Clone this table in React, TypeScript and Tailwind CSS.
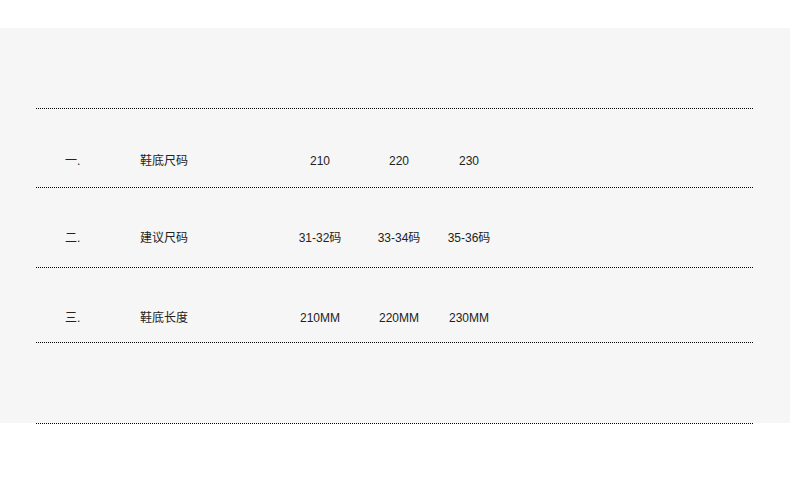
const rows = [
  { no: "一.", label: "鞋底尺码", values: ["210", "220", "230"], h: "h-[78px]", pt: "pt-[45px]" },
  { no: "二.", label: "建议尺码", values: ["31-32码", "33-34码", "35-36码"], h: "h-[79px]", pt: "pt-[43px]" },
  { no: "三.", label: "鞋底长度", values: ["210MM", "220MM", "230MM"], h: "h-[74px]", pt: "pt-[43px]" },
];

function Line() {
  return <div className="ml-[36px] w-[717px] border-t border-dotted border-black" />;
}

export default function App() {
  return (
    <div
      className="w-[790px] h-[490px] bg-white pt-[28px] text-[12px] leading-[14px] text-[#222]"
      style={{ fontFamily: '"Liberation Sans", "Noto Sans CJK SC", sans-serif' }}
    >
      <div className="h-[395px] bg-[#f6f6f6] pt-[80px]">
        <Line />
        {rows.map((row) => (
          <div key={row.no}>
            <div className={`${row.h} ${row.pt} flex`}>
              <div className="ml-[65px] w-[39px]">{row.no}</div>
              <div className="w-[120px] text-center">{row.label}</div>
              <div className="ml-[56px] w-[80px] text-center">{row.values[0]}</div>
              <div className="w-[78px] text-center">{row.values[1]}</div>
              <div className="w-[62px] text-center">{row.values[2]}</div>
            </div>
            <Line />
          </div>
        ))}
        <div className="h-[80px]" />
        <Line />
      </div>
    </div>
  );
}
